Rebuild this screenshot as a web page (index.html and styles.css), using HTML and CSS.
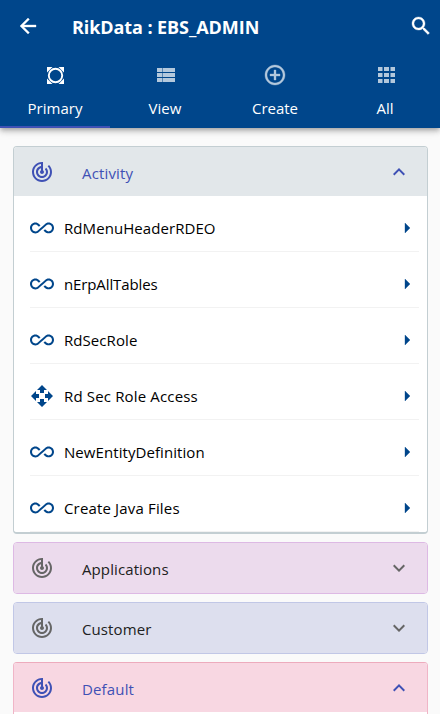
FILE: index.html
```html
<!DOCTYPE html>
<html lang="en">
<head>
<meta charset="utf-8">
<title>RikData : EBS_ADMIN</title>
<link rel="stylesheet" href="styles.css">
</head>
<body>
<svg class="defs" aria-hidden="true">
  <symbol id="track" viewBox="0 0 24 24"><path d="M19.07 4.93l-1.41 1.41C19.1 7.79 20 9.79 20 12c0 4.42-3.58 8-8 8s-8-3.58-8-8c0-4.08 3.05-7.44 7-7.93v2.02C8.16 6.57 6 9.03 6 12c0 3.31 2.69 6 6 6s6-2.69 6-6c0-1.66-.67-3.16-1.76-4.24l-1.41 1.41C15.55 9.9 16 10.9 16 12c0 2.21-1.79 4-4 4s-4-1.79-4-4c0-1.86 1.28-3.41 3-3.86v2.14c-.6.35-1 .98-1 1.72 0 1.1.9 2 2 2s2-.9 2-2c0-.74-.4-1.38-1-1.72V2h-1C6.48 2 2 6.48 2 12s4.48 10 10 10 10-4.48 10-10c0-2.76-1.12-5.26-2.93-7.07z"/></symbol>
  <symbol id="loop" viewBox="0 0 24 24"><path d="M18.6 6.62c-1.44 0-2.8.56-3.77 1.53L12 10.66 10.48 12h.01L7.8 14.39c-.64.64-1.49.99-2.4.99-1.87 0-3.39-1.51-3.39-3.38S3.53 8.62 5.4 8.62c.91 0 1.76.35 2.44 1.03l1.13 1 1.51-1.34L9.22 8.2C8.2 7.18 6.84 6.62 5.4 6.62 2.42 6.62 0 9.04 0 12s2.42 5.38 5.4 5.38c1.44 0 2.8-.56 3.77-1.53l2.83-2.5.01.01L13.52 12h-.01l2.69-2.39c.64-.64 1.49-.99 2.4-.99 1.87 0 3.39 1.51 3.39 3.38s-1.52 3.38-3.39 3.38c-.9 0-1.76-.35-2.44-1.03l-1.14-1.01-1.51 1.34 1.27 1.12c1.02 1.01 2.37 1.57 3.82 1.57 2.98 0 5.4-2.41 5.4-5.38s-2.42-5.37-5.4-5.37z"/></symbol>
  <symbol id="move" viewBox="0 0 24 24"><path d="M10 9h4V6h3l-5-5-5 5h3v3zm-1 1H6V7l-5 5 5 5v-3h3v-4zm14 2l-5-5v3h-3v4h3v3l5-5zm-9 3h-4v3H7l5 5 5-5h-3v-3z"/></symbol>
  <symbol id="right" viewBox="0 0 24 24"><path d="M10 17l5-5-5-5v10z"/></symbol>
  <symbol id="less" viewBox="0 0 24 24"><path d="M12 8l-6 6 1.41 1.41L12 10.83l4.59 4.58L18 14z"/></symbol>
  <symbol id="more" viewBox="0 0 24 24"><path d="M16.59 8.59L12 13.17 7.41 8.59 6 10l6 6 6-6z"/></symbol>
</svg>

<header class="appbar">
  <div class="toolbar">
    <svg class="icon bold" viewBox="0 0 24 24"><path d="M20 11H7.83l5.59-5.59L12 4l-8 8 8 8 1.41-1.41L7.83 13H20v-2z"/></svg>
    <h1 class="title">RikData : EBS_ADMIN</h1>
    <svg class="icon bold" viewBox="0 0 24 24"><path d="M15.5 14h-.79l-.28-.27C15.41 12.59 16 11.11 16 9.5 16 5.91 13.09 3 9.5 3S3 5.91 3 9.5 5.91 16 9.5 16c1.61 0 3.09-.59 4.23-1.57l.27.28v.79l5 4.99L20.49 19l-4.99-5zm-6 0C7.01 14 5 11.99 5 9.5S7.01 5 9.5 5 14 7.01 14 9.5 11.99 14 9.5 14z"/></svg>
  </div>
  <nav class="tabs">
    <a class="tab active">
      <svg class="icon" viewBox="0 0 24 24"><path d="M4 4h5.500L4 9.500zM15.500 4H21v5.500zM4 15.500L9.500 21H4zM21 15.500V21h-5.500z"/><circle class="lens" cx="12.500" cy="12.500" r="6.700"/></svg>
      <span>Primary</span>
    </a>
    <a class="tab">
      <svg class="icon" viewBox="0 0 24 24"><path d="M4 14h5v-4H4v4zm0 5h5v-4H4v4zM4 9h5V5H4v4zm5.500 5H22v-4H9.500v4zm0 5H22v-4H9.500v4zM9.500 5v4H22V5H9.500z"/></svg>
      <span>View</span>
    </a>
    <a class="tab">
      <svg class="icon bold" viewBox="0 0 24 24"><path d="M13 7h-2v4H7v2h4v4h2v-4h4v-2h-4V7zm-1-5C6.480 2 2 6.480 2 12s4.480 10 10 10 10-4.480 10-10S17.520 2 12 2zm0 18c-4.410 0-8-3.590-8-8s3.590-8 8-8 8 3.590 8 8-3.590 8-8 8z"/></svg>
      <span>Create</span>
    </a>
    <a class="tab">
      <svg class="icon" viewBox="0 0 24 24"><path d="M5 4h4.500v4H5zM11 4h5v4h-5zM17.500 4H22v4h-4.500zM5 10h4.500v4H5zM11 10h5v4h-5zM17.500 10H22v4h-4.500zM5 16h4.500v4H5zM11 16h5v4h-5zM17.500 16H22v4h-4.500z"/></svg>
      <span>All</span>
    </a>
  </nav>
</header>

<main class="panels">
  <section class="panel activity open">
    <div class="panel-head"><svg class="icon"><use href="#track"/></svg><h2>Activity</h2><svg class="icon"><use href="#less"/></svg></div>
    <ul class="rows">
      <li><svg class="icon"><use href="#loop"/></svg><span class="label">RdMenuHeaderRDEO</span><svg class="icon bold"><use href="#right"/></svg></li>
      <li><svg class="icon"><use href="#loop"/></svg><span class="label snug">nErpAllTables</span><svg class="icon bold"><use href="#right"/></svg></li>
      <li><svg class="icon"><use href="#loop"/></svg><span class="label">RdSecRole</span><svg class="icon bold"><use href="#right"/></svg></li>
      <li><svg class="icon"><use href="#move"/></svg><span class="label loose">Rd Sec Role Access</span><svg class="icon bold"><use href="#right"/></svg></li>
      <li><svg class="icon"><use href="#loop"/></svg><span class="label">NewEntityDefinition</span><svg class="icon bold"><use href="#right"/></svg></li>
      <li><svg class="icon"><use href="#loop"/></svg><span class="label loose">Create Java Files</span><svg class="icon bold"><use href="#right"/></svg></li>
    </ul>
  </section>
  <section class="panel applications">
    <div class="panel-head"><svg class="icon"><use href="#track"/></svg><h2>Applications</h2><svg class="icon"><use href="#more"/></svg></div>
  </section>
  <section class="panel customer">
    <div class="panel-head"><svg class="icon"><use href="#track"/></svg><h2>Customer</h2><svg class="icon"><use href="#more"/></svg></div>
  </section>
  <section class="panel default open">
    <div class="panel-head"><svg class="icon"><use href="#track"/></svg><h2>Default</h2><svg class="icon"><use href="#less"/></svg></div>
  </section>
</main>
</body>
</html>
```
FILE: styles.css
```css
* { box-sizing: border-box; }

body {
  margin: 0;
  height: 714px;
  overflow: hidden;
  background: #fafafa;
  color: #000;
  font: 400 15px/24px "Segoe UI", "Open Sans", "Noto Sans", sans-serif;
}

.defs { display: none; }
.icon { display: block; flex: none; width: 24px; height: 24px; fill: currentColor; }
.bold { stroke: currentColor; stroke-width: .35; }
h1, h2 { margin: 0; font-size: inherit; font-weight: inherit; }

.appbar {
  height: 128px;
  background: #00468b;
  color: #fff;
  box-shadow: 0 2px 4px -1px rgba(0,0,0,.2), 0 4px 5px rgba(0,0,0,.14), 0 1px 10px rgba(0,0,0,.12);
}
.toolbar { display: flex; align-items: center; height: 52px; padding: 0 7px 0 16px; }
.title { flex: 1; padding: 1px 0 0 32px; font-size: 18px; font-weight: 700; letter-spacing: -.08px; }

.tabs { display: grid; grid-template-columns: repeat(4, 1fr); height: 76px; }
.tab { display: flex; flex-direction: column; align-items: center; padding-top: 11px; border-bottom: 2px solid transparent; }
.tab span { margin-top: 9px; }
.tab .icon { opacity: .7; }
.tab.active { border-color: #3f51b5; }
.tab.active .icon { opacity: 1; }
.lens { fill: #00468b; stroke: #fff; stroke-width: 1.9; }

.panels { display: flex; flex-direction: column; gap: 8px; padding: 18px 12px 0 13px; }
.panel { flex: none; border: 1px solid; border-radius: 4px; overflow: hidden; background: #fff; }
.panel-head { display: flex; align-items: center; height: 50px; padding: 0 16px; color: #666; }
.panel-head h2 { flex: 1; padding: 1px 0 0 28px; color: #212121; letter-spacing: .1px; }
.open .panel-head { height: 49px; }
.panel.open .panel-head, .panel.open h2 { color: #3f51b5; }
.panel.open h2 { padding-top: 3px; letter-spacing: .15px; }

.activity { height: 388px; border-color: #c3ced2; border-bottom-width: 2px; }
.activity .panel-head { background: #e2e7ea; }
.applications { border-color: #ddb9e4; }
.applications .panel-head { background: #ecdbed; }
.customer { border-color: #c1c7e6; }
.customer .panel-head { background: #dddfee; }
.default { height: 80px; border-color: #f0b5c7; border-top-color: #edabbd; }
.default .panel-head { background: #f8d7e2; }

.rows { margin: 0; padding: 0 8px 0 16px; list-style: none; color: #00468b; }
.rows li { display: flex; align-items: center; height: 56px; padding-top: 8px; border-bottom: 1px solid #f2f2f2; }
.label { flex: 1; padding-left: 10px; color: #000; letter-spacing: .07px; }
.loose { letter-spacing: .16px; }
.snug { letter-spacing: -.12px; }
```
